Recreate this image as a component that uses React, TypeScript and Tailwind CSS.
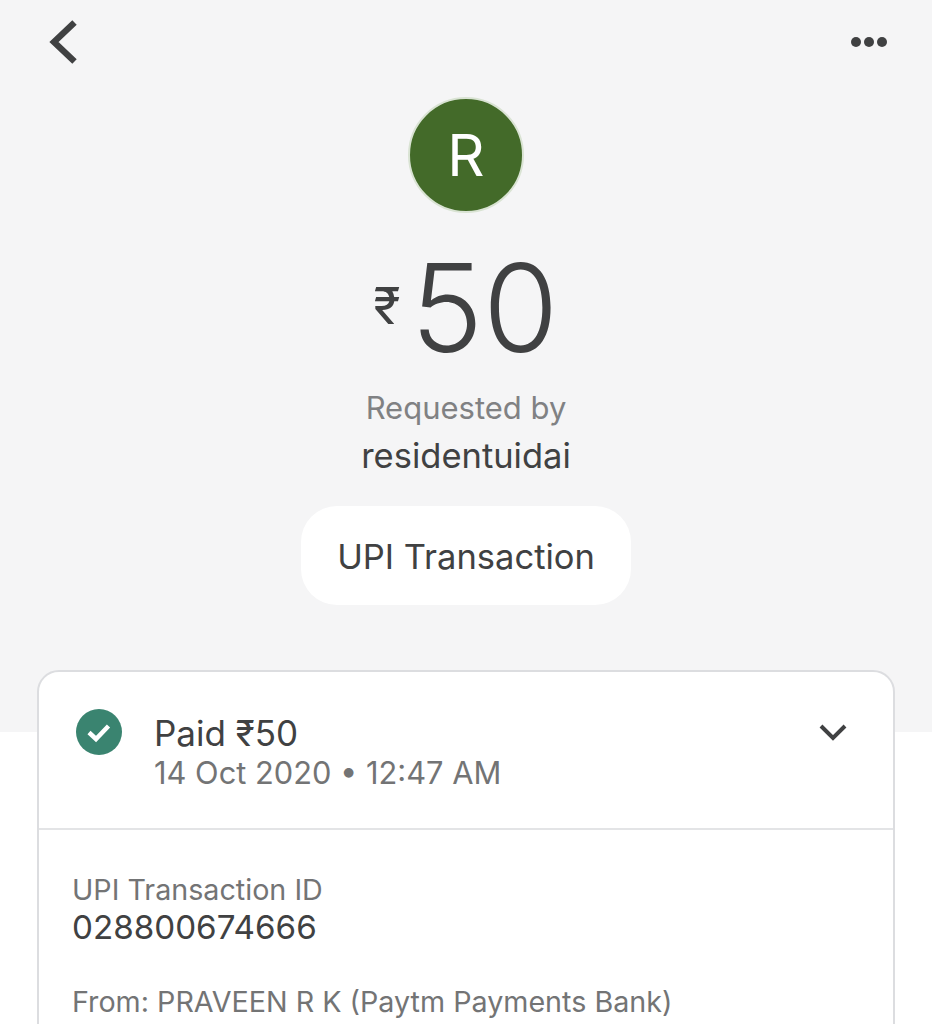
const App = () => {
  return (
    <div className="h-screen overflow-hidden bg-white font-['Inter',sans-serif] text-[#404142]">

      {/* Top section */}
      <div className="h-[732px] bg-[#f5f5f6] flex flex-col items-center">
        <div className="w-full h-[97px] flex justify-between items-start pl-[49px] pr-[45px] pt-[20px]">
          <svg viewBox="0 0 30 44" className="w-[30px] h-[44px]">
            <path d="M25.5 2.5 L5 22 L25.5 41.5" fill="none" stroke="#404142" strokeWidth="6.4" />
          </svg>
          <div className="flex gap-[3px] mt-[17px]">
            <span className="w-[10px] h-[10px] rounded-full bg-[#404142]" />
            <span className="w-[10px] h-[10px] rounded-full bg-[#404142]" />
            <span className="w-[10px] h-[10px] rounded-full bg-[#404142]" />
          </div>
        </div>

        <div className="w-[116px] h-[116px] rounded-full bg-[#436a29] border-2 border-[#d9e3d3] flex items-center justify-center text-white text-[58px]">
          R
        </div>

        <div className="flex items-start h-[148px] mt-[21px] mb-[3px] font-light">
          <span className="text-[50px] leading-none mt-[47px] mr-[10px] font-normal">₹</span>
          <span className="text-[122px] leading-[148px]">50</span>
        </div>

        <p className="text-[31px] leading-[36px] text-[#808183] mt-[5px]">Requested by</p>
        <p className="text-[34.5px] leading-[44px] mt-[8px]">residentuidai</p>

        <div className="mt-[28px] w-[330px] h-[99px] bg-white rounded-[36px] flex items-center justify-center text-[34.5px] pt-[2px]">
          UPI Transaction
        </div>
      </div>

      {/* Details card */}
      <div className="-mt-[62px] mx-[37px] bg-white border-2 border-[#dcdde0] rounded-[22px] h-[500px]">
        <div className="h-[158px] border-b-2 border-[#e3e4e6] flex items-start pl-[37px] pr-[46px] pt-[37px]">
          <svg viewBox="0 0 46 46" className="w-[46px] h-[46px] shrink-0">
            <circle cx="23" cy="23" r="23" fill="#3a8470" />
            <path d="M13 23.5 L20 30 L32.5 17" fill="none" stroke="#fff" strokeWidth="4.5" />
          </svg>
          <div className="ml-[32px] flex-1 mt-[2px]">
            <p className="text-[35px] leading-[44px]">Paid ₹50</p>
            <p className="text-[30.8px] leading-[36px] text-[#737475]">14 Oct 2020 • 12:47 AM</p>
          </div>
          <svg viewBox="0 0 28 18" className="w-[28px] h-[18px] mt-[14px]">
            <path d="M2 3 L14 15 L26 3" fill="none" stroke="#404142" strokeWidth="4" />
          </svg>
        </div>

        <div className="pl-[33px] pt-[44px]">
          <p className="text-[28.7px] leading-[32px] text-[#737475]">UPI Transaction ID</p>
          <p className="text-[33.2px] leading-[40px] mt-[1px]">028800674666</p>
          <p className="text-[28.7px] leading-[32px] text-[#737475] mt-[39px]">From: PRAVEEN R K (Paytm Payments Bank)</p>
        </div>
      </div>
    </div>
  );
};

export default App;
